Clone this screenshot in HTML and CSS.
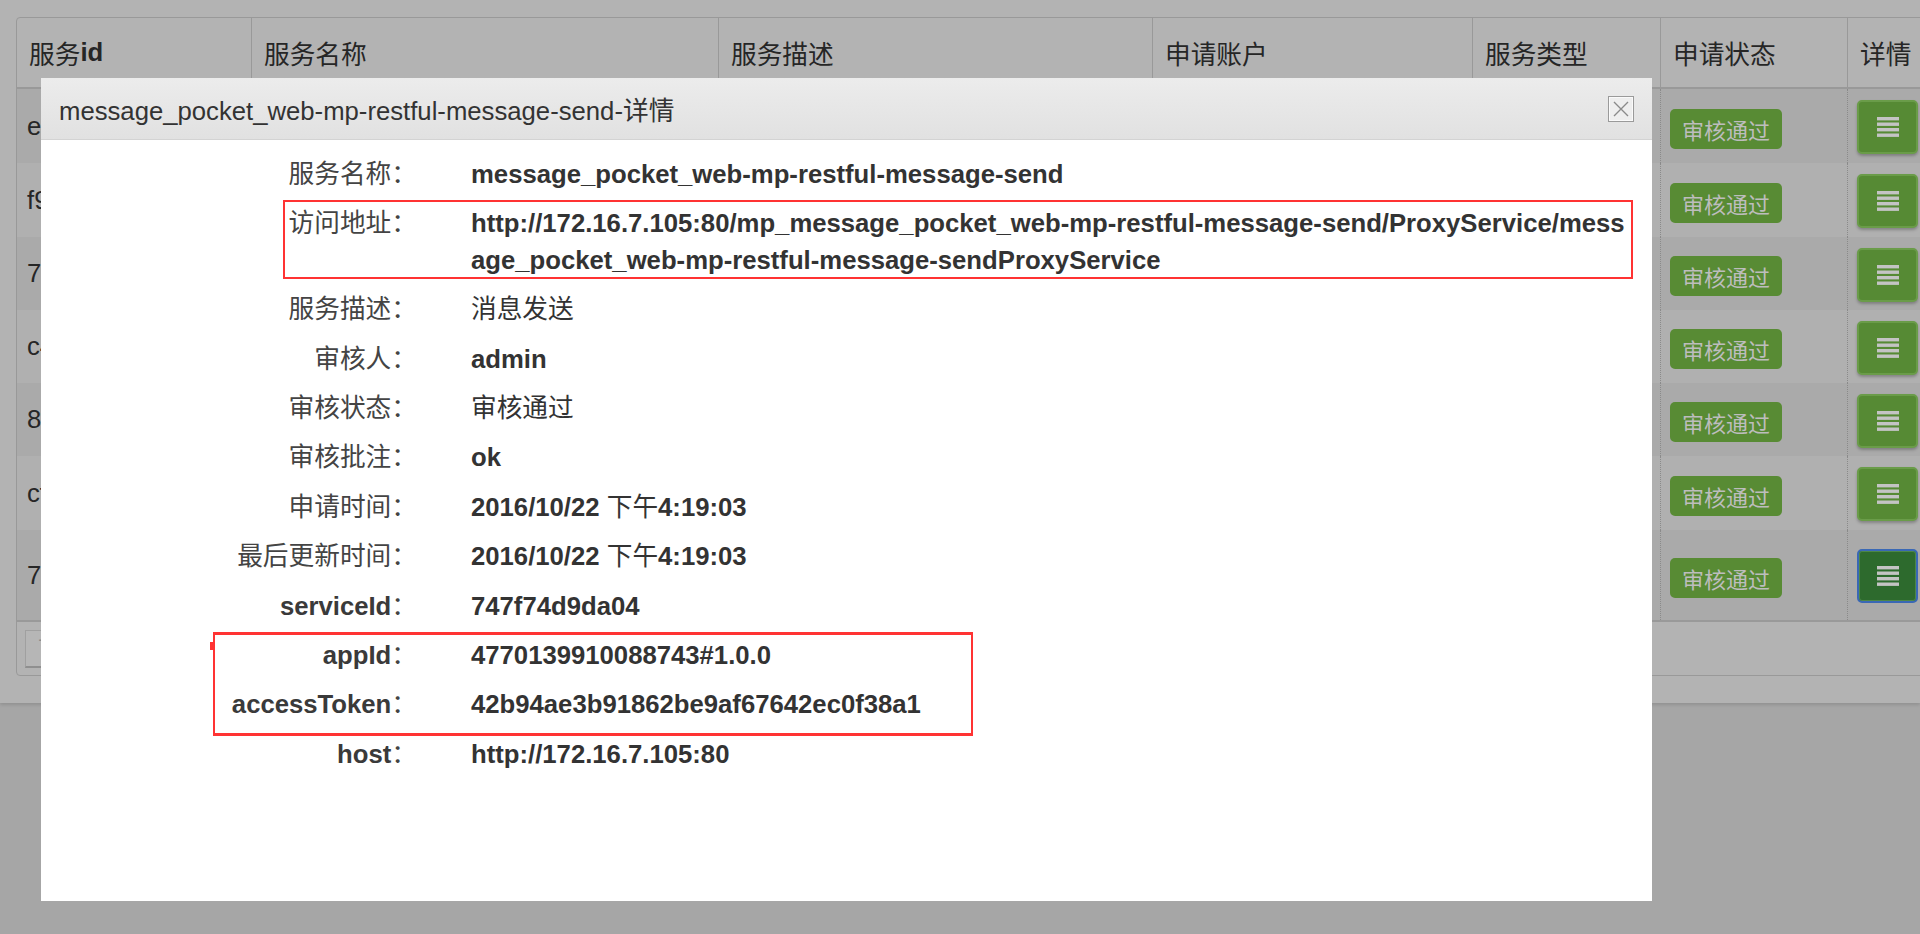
FILE: index.html
```html
<!DOCTYPE html>
<html lang="zh-CN">
<head>
<meta charset="utf-8">
<title>服务申请列表</title>
<link rel="stylesheet" href="styles.css">
</head>
<body>
<div class="page">
  <div class="panel">
    <div class="tr th">
      <div class="cell">服务<b>id</b></div>
      <div class="cell">服务名称</div>
      <div class="cell">服务描述</div>
      <div class="cell">申请账户</div>
      <div class="cell">服务类型</div>
      <div class="cell">申请状态</div>
      <div class="cell">详情</div>
    </div>
    <div class="tbody">
      <div class="tr row odd h74">
        <div class="cell">e6</div><div class="cell"></div><div class="cell"></div><div class="cell"></div><div class="cell"></div>
        <div class="cell"><span class="badge">审核通过</span></div>
        <div class="cell"><span class="btn"><svg width="22" height="20" viewBox="0 0 22 20"><rect y="0" width="22" height="3.4"/><rect y="5.5" width="22" height="3.4"/><rect y="11" width="22" height="3.4"/><rect y="16.5" width="22" height="3.4"/></svg></span></div>
      </div>
      <div class="tr row even h74">
        <div class="cell">f9</div><div class="cell"></div><div class="cell"></div><div class="cell"></div><div class="cell"></div>
        <div class="cell"><span class="badge">审核通过</span></div>
        <div class="cell"><span class="btn"><svg width="22" height="20" viewBox="0 0 22 20"><rect y="0" width="22" height="3.4"/><rect y="5.5" width="22" height="3.4"/><rect y="11" width="22" height="3.4"/><rect y="16.5" width="22" height="3.4"/></svg></span></div>
      </div>
      <div class="tr row odd h73">
        <div class="cell">7b</div><div class="cell"></div><div class="cell"></div><div class="cell"></div><div class="cell"></div>
        <div class="cell"><span class="badge">审核通过</span></div>
        <div class="cell"><span class="btn"><svg width="22" height="20" viewBox="0 0 22 20"><rect y="0" width="22" height="3.4"/><rect y="5.5" width="22" height="3.4"/><rect y="11" width="22" height="3.4"/><rect y="16.5" width="22" height="3.4"/></svg></span></div>
      </div>
      <div class="tr row even h73">
        <div class="cell">c4</div><div class="cell"></div><div class="cell"></div><div class="cell"></div><div class="cell"></div>
        <div class="cell"><span class="badge">审核通过</span></div>
        <div class="cell"><span class="btn"><svg width="22" height="20" viewBox="0 0 22 20"><rect y="0" width="22" height="3.4"/><rect y="5.5" width="22" height="3.4"/><rect y="11" width="22" height="3.4"/><rect y="16.5" width="22" height="3.4"/></svg></span></div>
      </div>
      <div class="tr row odd h73">
        <div class="cell">8a</div><div class="cell"></div><div class="cell"></div><div class="cell"></div><div class="cell"></div>
        <div class="cell"><span class="badge">审核通过</span></div>
        <div class="cell"><span class="btn"><svg width="22" height="20" viewBox="0 0 22 20"><rect y="0" width="22" height="3.4"/><rect y="5.5" width="22" height="3.4"/><rect y="11" width="22" height="3.4"/><rect y="16.5" width="22" height="3.4"/></svg></span></div>
      </div>
      <div class="tr row even h74">
        <div class="cell">cf</div><div class="cell"></div><div class="cell"></div><div class="cell"></div><div class="cell"></div>
        <div class="cell"><span class="badge">审核通过</span></div>
        <div class="cell"><span class="btn"><svg width="22" height="20" viewBox="0 0 22 20"><rect y="0" width="22" height="3.4"/><rect y="5.5" width="22" height="3.4"/><rect y="11" width="22" height="3.4"/><rect y="16.5" width="22" height="3.4"/></svg></span></div>
      </div>
      <div class="tr row odd h90">
        <div class="cell">74</div><div class="cell"></div><div class="cell"></div><div class="cell"></div><div class="cell"></div>
        <div class="cell"><span class="badge">审核通过</span></div>
        <div class="cell"><span class="btn active"><svg width="22" height="20" viewBox="0 0 22 20"><rect y="0" width="22" height="3.4"/><rect y="5.5" width="22" height="3.4"/><rect y="11" width="22" height="3.4"/><rect y="16.5" width="22" height="3.4"/></svg></span></div>
      </div>
    </div>
    <div class="pager"><span class="pager-btn">首页</span></div>
  </div>
</div>

<div class="modal">
  <div class="modal-head">
    <span class="modal-title">message_pocket_web-mp-restful-message-send-详情</span>
    <span class="close"><svg width="18" height="18" viewBox="0 0 18 18"><path d="M2 2 L16 16 M16 2 L2 16"/></svg></span>
  </div>
  <div class="modal-body">
    <div class="kv"><div class="k"><span class="cj">服务名称：</span></div><div class="v">message_pocket_web-mp-restful-message-send</div></div>
    <div class="kv"><div class="k"><span class="cj">访问地址：</span></div><div class="v">http://172.16.7.105:80/mp_message_pocket_web-mp-restful-message-send/ProxyService/message_pocket_web-mp-restful-message-sendProxyService</div></div>
    <div class="kv"><div class="k"><span class="cj">服务描述：</span></div><div class="v"><span class="cj">消息发送</span></div></div>
    <div class="kv"><div class="k"><span class="cj">审核人：</span></div><div class="v">admin</div></div>
    <div class="kv"><div class="k"><span class="cj">审核状态：</span></div><div class="v"><span class="cj">审核通过</span></div></div>
    <div class="kv"><div class="k"><span class="cj">审核批注：</span></div><div class="v">ok</div></div>
    <div class="kv"><div class="k"><span class="cj">申请时间：</span></div><div class="v">2016/10/22 <span class="cj">下午</span>4:19:03</div></div>
    <div class="kv"><div class="k"><span class="cj">最后更新时间：</span></div><div class="v">2016/10/22 <span class="cj">下午</span>4:19:03</div></div>
    <div class="kv"><div class="k"><b>serviceId</b><span class="cj">：</span></div><div class="v">747f74d9da04</div></div>
    <div class="kv"><div class="k"><b>appId</b><span class="cj">：</span></div><div class="v">4770139910088743#1.0.0</div></div>
    <div class="kv"><div class="k"><b>accessToken</b><span class="cj">：</span></div><div class="v">42b94ae3b91862be9af67642ec0f38a1</div></div>
    <div class="kv"><div class="k"><b>host</b><span class="cj">：</span></div><div class="v">http://172.16.7.105:80</div></div>
  </div>
  <div class="mark mark-url"></div>
  <div class="mark mark-keys"></div>
  <div class="mark-tick"></div>
</div>
</body>
</html>
```
FILE: styles.css
```css
* { box-sizing: border-box; }
html, body { margin: 0; height: 100%; }
body {
  background: #a6a6a6;
  font-family: "Liberation Sans", Arial, "Noto Sans CJK SC", sans-serif;
  font-size: 25.7px;
  color: #262626;
  overflow: hidden;
  position: relative;
}

/* page behind the dialog (dimmed) */
.page {
  background: #b3b3b3;
  height: 703px;
  padding: 17px 0 0 16px;
  box-shadow: 0 2px 3px rgba(0, 0, 0, 0.12);
  overflow: hidden;
}
.panel {
  width: 1960px;
  height: 659px;
  border: 1px solid #999;
  border-radius: 4px;
  background: #b3b3b3;
}
.tr {
  display: grid;
  grid-template-columns: 234px 467px 434px 320px 188px 187px 120px;
}
.th {
  height: 71px;
  border-bottom: 2px solid #999;
}
.th .cell {
  border-left: 1px solid #999;
  padding-left: 12px;
  display: flex;
  align-items: center;
}
.th .cell:first-child { border-left: 0; }
.tbody { border-bottom: 2px solid #999; }
.row .cell {
  border-left: 1px dotted #8a8a8a;
  padding-left: 9px;
  display: flex;
  align-items: center;
  white-space: nowrap;
  overflow: hidden;
}
.row .cell:first-child { border-left: 0; padding-left: 10px; }
.odd { background: #aaaaaa; }
.even { background: #b0b0b0; }
.h74 { height: 74px; }
.h73 { height: 73px; }
.h90 { height: 90px; }

.badge {
  display: inline-flex;
  align-items: center;
  height: 40px;
  padding: 0 12px;
  margin-top: 5px;
  background: #588b34;
  color: #bdbdbd;
  border-radius: 5px;
  font-size: 22px;
}
.btn {
  width: 61px;
  height: 54px;
  border-radius: 5px;
  background: #568a34;
  border: 2px solid #6a9c49;
  box-shadow: 0 2px 3px rgba(0, 0, 0, 0.25);
  display: flex;
  align-items: center;
  justify-content: center;
  margin-top: 2px;
}
.btn svg rect { fill: #c4c4c4; }
.btn.active {
  background: #2d6a2d;
  border-color: #3a68b5;
  box-shadow: inset 0 0 0 1px #4d8748;
}

.pager { padding: 8px 0 0 8px; }
.pager-btn {
  display: block;
  width: 80px;
  height: 38px;
  border: 1px solid #a0a0a0;
  border-bottom: 2px solid #8f8f8f;
  background: #b6b6b6;
  color: #8a8a8a;
  font-size: 22px;
  line-height: 34px;
  padding-left: 12px;
}

/* dialog */
.modal {
  position: absolute;
  left: 41px;
  top: 78px;
  width: 1611px;
  height: 823px;
  background: #fff;
}
.modal-head {
  height: 62px;
  border-bottom: 1px solid #d3d3d3;
  background: linear-gradient(#ececec, #e1e1e1);
  display: flex;
  align-items: center;
  padding: 0 18px;
}
.modal-title { color: #333; }
.close {
  margin-left: auto;
  width: 26px;
  height: 26px;
  border: 1px solid #9a9a9a;
  box-shadow: inset 0 0 0 1px #fafafa;
  background: #eeeeee;
  display: flex;
  align-items: center;
  justify-content: center;
}
.close path { stroke: #8a8a8a; stroke-width: 1.4; fill: none; }

.modal-body { padding-top: 15.5px; }
.kv {
  display: grid;
  grid-template-columns: 376px 1161px;
  column-gap: 54px;
  line-height: 37px;
  margin-bottom: 12.4px;
}
.k { text-align: right; color: #444; }
.k b { color: #3a3a3a; }
.v { font-weight: bold; color: #333; word-break: break-all; }
.cj { font-weight: normal; line-height: 26px; }

/* red annotation frames drawn over the screenshot */
.mark {
  position: absolute;
  border: 2px solid #f33;
}
.mark-url { left: 242px; top: 122px; width: 1350px; height: 79px; }
.mark-keys { left: 172px; top: 554px; width: 760px; height: 104px; border-top-width: 3px; border-bottom-width: 3px; }
.mark-tick {
  position: absolute;
  left: 169px;
  top: 564px;
  width: 4px;
  height: 8px;
  background: #f33;
}
```
